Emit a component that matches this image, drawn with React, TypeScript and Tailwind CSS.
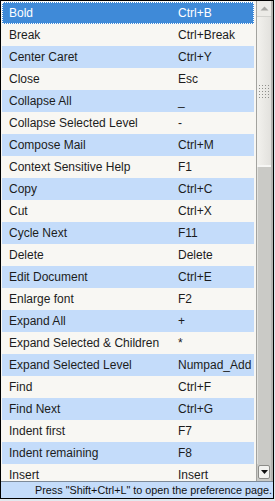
import React from "react";

const rows: [string, string][] = [
  ["Bold", "Ctrl+B"],
  ["Break", "Ctrl+Break"],
  ["Center Caret", "Ctrl+Y"],
  ["Close", "Esc"],
  ["Collapse All", "_"],
  ["Collapse Selected Level", "-"],
  ["Compose Mail", "Ctrl+M"],
  ["Context Sensitive Help", "F1"],
  ["Copy", "Ctrl+C"],
  ["Cut", "Ctrl+X"],
  ["Cycle Next", "F11"],
  ["Delete", "Delete"],
  ["Edit Document", "Ctrl+E"],
  ["Enlarge font", "F2"],
  ["Expand All", "+"],
  ["Expand Selected & Children", "*"],
  ["Expand Selected Level", "Numpad_Add"],
  ["Find", "Ctrl+F"],
  ["Find Next", "Ctrl+G"],
  ["Indent first", "F7"],
  ["Indent remaining", "F8"],
  ["Insert", "Insert"],
];

function Grip() {
  const dots = [];
  for (let r = 0; r < 5; r++) {
    for (let c = 0; c < 4; c++) {
      dots.push(<rect key={`${r}-${c}`} x={c * 3} y={r * 3} width="1" height="1" fill="#8f8f8b" />);
    }
  }
  return (
    <svg width="10" height="13" viewBox="0 0 10 13">
      {dots}
    </svg>
  );
}

export default function App() {
  return (
    <div className="w-[275px] h-[501px] bg-[#e3e8ee] overflow-hidden font-['Liberation_Sans',Arial,sans-serif] text-[#1c1c1c]">
      <div className="w-[274px] h-[499px] border border-black bg-[#f8f7f3] flex flex-col">
        <div className="flex h-[480px]">
          <div className="w-[255px] overflow-hidden pt-px pl-px pr-[2px]">
            {rows.map(([name, key], i) => {
              const sel = i === 0;
              const bg = sel ? "bg-[#3f8ad8] text-white" : i % 2 === 0 ? "bg-[#c4dcfa]" : "bg-[#f8f7f3]";
              return (
                <div key={name} className={`relative flex h-[22px] shrink-0 items-center text-[12px] leading-[22px] pl-[7px] ${bg}`}>
                  {sel && <div className="absolute inset-0 border border-dotted border-white" />}
                  <span className="w-[169px] whitespace-nowrap overflow-hidden">{name}</span>
                  <span className="whitespace-nowrap">{key}</span>
                </div>
              );
            })}
          </div>
          <div className="w-[17px] flex flex-col border-l border-[#a3a39f] border-r-2 border-r-[#b4b4b0] bg-[#cacac6]">
            <div className="h-[16px] flex items-center justify-center bg-[#ecebe7] border-b border-[#d2d2ce]">
              <svg width="9" height="5" viewBox="0 0 9 5">
                <path d="M0.5 4.5 L4.5 0.5 L8.5 4.5 Z" fill="#a8a8a4" />
              </svg>
            </div>
            <div className="h-[150px] flex items-center justify-center bg-gradient-to-r from-[#f3f2ee] to-[#e2e1dd] border-b-2 border-[#f6f6f4]">
              <Grip />
            </div>
            <div className="flex-1 border-l border-[#e2e2de]" />
            <div className="h-[17px] flex items-start justify-center pt-px bg-[#cacac6]">
              <div className="w-[12px] h-[14px] rounded-[2px] border border-[#8c8c88] bg-[#f2f2ef] flex items-center justify-center">
                <svg width="7" height="4" viewBox="0 0 7 4">
                  <path d="M0 0 L7 0 L3.5 4 Z" fill="#111" />
                </svg>
              </div>
            </div>
          </div>
        </div>
        <div className="h-[17px] border-t border-[#7d8a99] bg-[#c4dcfa] text-[10.8px] leading-[16px] text-right pr-px whitespace-nowrap text-[#111]">
          Press "Shift+Ctrl+L" to open the preference page.
        </div>
      </div>
    </div>
  );
}
